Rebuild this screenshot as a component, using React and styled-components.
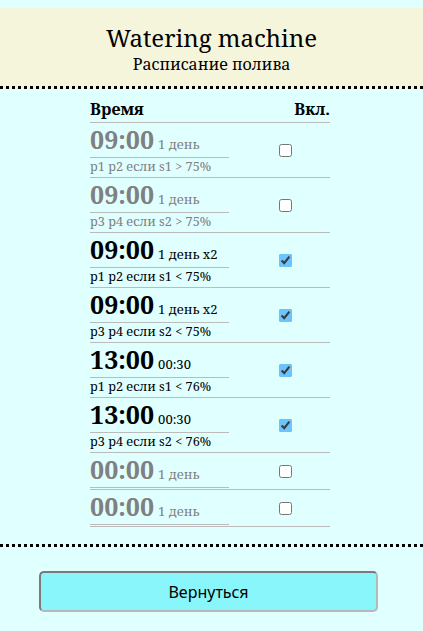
import React from "react";
import styled, { createGlobalStyle } from "styled-components";

const Global = createGlobalStyle`
  html, body { margin: 0; padding: 0; }
  body {
    background: #e0ffff;
    font-family: "Noto Serif", "DejaVu Serif", serif;
    color: #000;
    padding-top: 8px;
  }
`;

const Header = styled.header`
  background: #f5f5dc;
  border-bottom: 3px dotted #000;
  padding: 16px 0 12px;
  text-align: center;
`;

const Title = styled.div`
  font-size: 24px;
  line-height: 28px;
  margin-bottom: 3px;
`;

const Subtitle = styled.div`
  font-size: 16px;
  line-height: 19px;
`;

const Section = styled.main`
  border-bottom: 3px dotted #000;
  padding: 9px 3px 17px 0;
  display: flex;
  justify-content: center;
`;

const Table = styled.div`
  width: 240px;
  display: flex;
  flex-direction: column;
`;

const HeadRow = styled.div`
  display: flex;
  justify-content: space-between;
  font-size: 16px;
  line-height: 19px;
  font-weight: bold;
  padding: 2px 0 3px;
  border-bottom: 1px solid #bbb;
`;

const Row = styled.div`
  display: grid;
  grid-template-columns: 150px 90px;
  align-items: center;
  border-bottom: 1px solid #bbb;
  color: ${(p) => (p.$on ? "#000" : "#808080")};
`;

const Left = styled.div`
  display: flex;
  flex-direction: column;
  padding-bottom: ${(p) => (p.$sub ? "0" : "1px")};
`;

const TimeLine = styled.div`
  width: 139px;
  height: 24px;
  line-height: 24px;
  padding: 4px 0 6px;
  border-bottom: 1px solid #bbb;
  white-space: nowrap;
`;

const Time = styled.span`
  font-size: 25px;
  font-weight: bold;
`;

const Period = styled.span`
  font-size: 13px;
  margin-left: 4px;
`;

const Sub = styled.div`
  font-size: 12.7px;
  line-height: 15px;
  padding: 1px 0 3px;
  white-space: nowrap;
`;

const Cell = styled.div`
  display: flex;
  justify-content: center;
`;

const Check = styled.input`
  margin: 0;
  width: 13px;
  height: 13px;
  accent-color: #6cc4ff;
`;

const Footer = styled.footer`
  display: flex;
  padding: 24px 45px 0 39px;
`;

const Button = styled.button`
  flex: 1;
  height: 41px;
  background: #88f6fa;
  border: 2px solid;
  border-color: #7a7a7a #b8b8b8 #b8b8b8 #7a7a7a;
  border-radius: 5px;
  font-family: "Noto Sans", sans-serif;
  font-size: 16px;
  color: #000;
`;

const rows = [
  { t: "09:00", p: "1 день", s: "p1 p2 если s1 > 75%", on: false },
  { t: "09:00", p: "1 день", s: "p3 p4 если s2 > 75%", on: false },
  { t: "09:00", p: "1 день x2", s: "p1 p2 если s1 < 75%", on: true },
  { t: "09:00", p: "1 день x2", s: "p3 p4 если s2 < 75%", on: true },
  { t: "13:00", p: "00:30", s: "p1 p2 если s1 < 76%", on: true },
  { t: "13:00", p: "00:30", s: "p3 p4 если s2 < 76%", on: true },
  { t: "00:00", p: "1 день", s: null, on: false },
  { t: "00:00", p: "1 день", s: null, on: false },
];

export default function App() {
  return (
    <>
      <Global />
      <Header>
        <Title>Watering machine</Title>
        <Subtitle>Расписание полива</Subtitle>
      </Header>
      <Section>
        <Table>
          <HeadRow>
            <span>Время</span>
            <span>Вкл.</span>
          </HeadRow>
          {rows.map((r, i) => (
            <Row key={i} $on={r.on}>
              <Left $sub={!!r.s}>
                <TimeLine>
                  <Time>{r.t}</Time>
                  <Period>{r.p}</Period>
                </TimeLine>
                {r.s && <Sub>{r.s}</Sub>}
              </Left>
              <Cell>
                <Check type="checkbox" defaultChecked={r.on} />
              </Cell>
            </Row>
          ))}
        </Table>
      </Section>
      <Footer>
        <Button>Вернуться</Button>
      </Footer>
    </>
  );
}
